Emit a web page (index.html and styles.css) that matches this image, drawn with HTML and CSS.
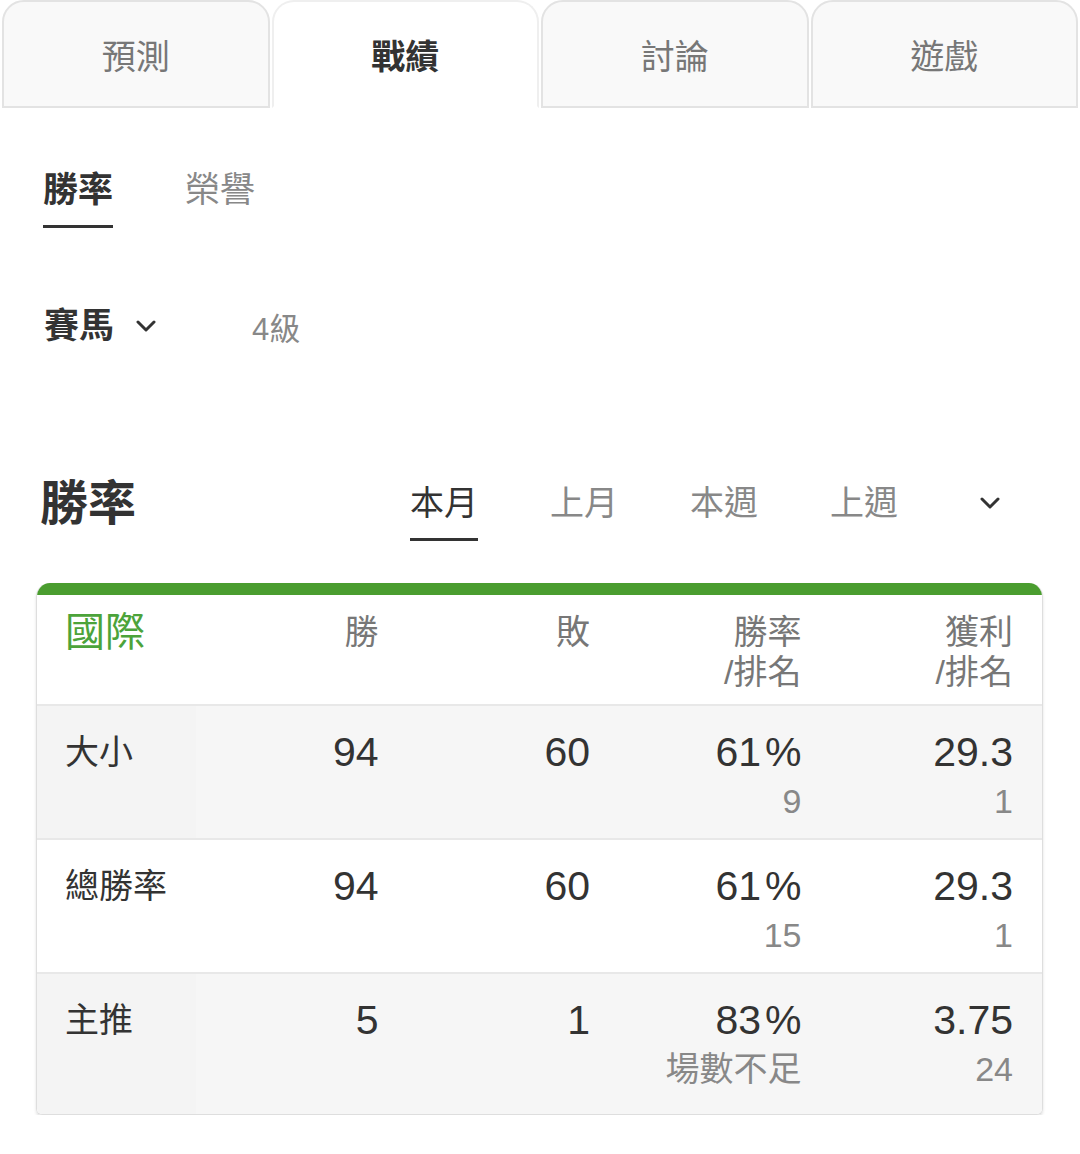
FILE: index.html
```html
<!DOCTYPE html>
<html lang="zh-Hant">
<head>
<meta charset="utf-8">
<title>戰績</title>
<link rel="stylesheet" href="styles.css">
</head>
<body>
  <nav class="tabs">
    <div class="tab">預測</div>
    <div class="tab active">戰績</div>
    <div class="tab">討論</div>
    <div class="tab">遊戲</div>
  </nav>

  <div class="subtabs">
    <span class="subtab active">勝率</span>
    <span class="subtab">榮譽</span>
  </div>

  <div class="filter">
    <span class="filter-select">賽馬
      <svg class="chev" width="20" height="13" viewBox="0 0 20 13"><polyline points="2,2 10,10 18,2" fill="none" stroke="#333" stroke-width="3" stroke-linecap="round" stroke-linejoin="round"/></svg>
    </span>
    <span class="filter-level">4級</span>
  </div>

  <div class="section-head">
    <h2 class="section-title">勝率</h2>
    <div class="periods">
      <span class="period active">本月</span>
      <span class="period">上月</span>
      <span class="period">本週</span>
      <span class="period">上週</span>
    </div>
    <svg class="period-more" width="20" height="14" viewBox="0 0 20 14"><polyline points="2,3 10,11 18,3" fill="none" stroke="#333" stroke-width="3" stroke-linecap="round" stroke-linejoin="round"/></svg>
  </div>

  <div class="card">
    <div class="card-bar"></div>
    <div class="row head">
      <div class="cell label league">國際</div>
      <div class="cell">勝</div>
      <div class="cell">敗</div>
      <div class="cell">勝率<br>/排名</div>
      <div class="cell">獲利<br>/排名</div>
    </div>
    <div class="row shade">
      <div class="cell label">大小</div>
      <div class="cell"><div class="num">94</div></div>
      <div class="cell"><div class="num">60</div></div>
      <div class="cell"><div class="num">61<span class="pct">%</span></div><div class="sub">9</div></div>
      <div class="cell"><div class="num">29.3</div><div class="sub">1</div></div>
    </div>
    <div class="row">
      <div class="cell label">總勝率</div>
      <div class="cell"><div class="num">94</div></div>
      <div class="cell"><div class="num">60</div></div>
      <div class="cell"><div class="num">61<span class="pct">%</span></div><div class="sub">15</div></div>
      <div class="cell"><div class="num">29.3</div><div class="sub">1</div></div>
    </div>
    <div class="row shade last">
      <div class="cell label">主推</div>
      <div class="cell"><div class="num">5</div></div>
      <div class="cell"><div class="num">1</div></div>
      <div class="cell"><div class="num">83<span class="pct">%</span></div><div class="sub">場數不足</div></div>
      <div class="cell"><div class="num">3.75</div><div class="sub">24</div></div>
    </div>
  </div>
</body>
</html>
```

FILE: styles.css
```css
* { box-sizing: border-box; }

html, body {
  margin: 0;
  background: #fff;
}

body {
  font-family: "Liberation Sans", "Noto Sans CJK TC", sans-serif;
  color: #333;
}

/* top tab bar */
.tabs {
  display: flex;
  gap: 2px;
  padding: 0 2px;
}

.tab {
  flex: 1;
  height: 108px;
  display: flex;
  align-items: center;
  justify-content: center;
  background: #f9f9f9;
  border: 2px solid #e3e3e3;
  border-radius: 22px 22px 0 0;
  font-size: 34px;
  color: #777;
}

.tab.active {
  background: #fff;
  border-color: #efefef;
  border-bottom-color: #fff;
  color: #333;
  font-weight: 700;
}

/* 勝率 / 榮譽 */
.subtabs {
  display: flex;
  gap: 72px;
  padding-left: 43px;
  margin-top: 60px;
}

.subtab {
  font-size: 35px;
  line-height: 44px;
  color: #888;
  padding-bottom: 13px;
  border-bottom: 3px solid transparent;
}

.subtab.active {
  color: #333;
  font-weight: 700;
  border-bottom-color: #333;
}

/* sport filter */
.filter {
  display: flex;
  align-items: center;
  padding-left: 44px;
  margin-top: 76px;
  height: 44px;
}

.filter-select {
  display: flex;
  align-items: center;
  gap: 22px;
  font-size: 35px;
  font-weight: 700;
  line-height: 44px;
}

.filter-level {
  margin-left: 96px;
  font-size: 31px;
  color: #888;
}

/* section header with period switcher */
.section-head {
  display: flex;
  align-items: flex-start;
  margin-top: 133px;
  padding-left: 40px;
}

.section-title {
  margin: 0;
  width: 370px;
  font-size: 48px;
  line-height: 46px;
  font-weight: 700;
  color: #333;
}

.periods {
  display: flex;
  gap: 72px;
}

.period {
  font-size: 34px;
  line-height: 44px;
  color: #888;
  padding-bottom: 13px;
  border-bottom: 3px solid transparent;
}

.period.active {
  color: #333;
  border-bottom-color: #333;
}

.period-more {
  margin-left: auto;
  margin-right: 80px;
  margin-top: 15px;
}

/* stats card */
.card {
  margin: 42px 37px 0 36px;
  border: 1px solid #dedede;
  border-top: none;
  border-radius: 14px 14px 6px 6px;
  overflow: hidden;
  box-shadow: 0 2px 3px rgba(0, 0, 0, 0.12);
}

.card-bar {
  height: 12px;
  background: #4a9d2f;
}

.row {
  display: grid;
  grid-template-columns: 159px repeat(4, 1fr);
  border-top: 2px solid #e8e8e8;
}

.row.shade { background: #f6f6f6; }
.row.shade .label { background: #f4f4f4; }

.cell {
  padding: 21px 29px 13px 0;
  text-align: right;
}

.row.last .cell { padding-bottom: 21px; }

.label {
  text-align: left;
  padding-left: 28px;
  font-size: 34px;
  line-height: 50px;
  color: #333;
}

.row.head {
  border-top: none;
  background: #fff;
}

.row.head .cell {
  padding-top: 17px;
  padding-bottom: 12px;
  font-size: 34px;
  line-height: 40px;
  color: #777;
}

.row.head .league {
  font-size: 40px;
  color: #4ca33a;
  background: #fff;
}

.num {
  font-size: 41px;
  line-height: 50px;
  color: #333;
}

.pct {
  margin-left: 4px;
}

.sub {
  font-size: 34px;
  line-height: 48px;
  color: #888;
}
```
